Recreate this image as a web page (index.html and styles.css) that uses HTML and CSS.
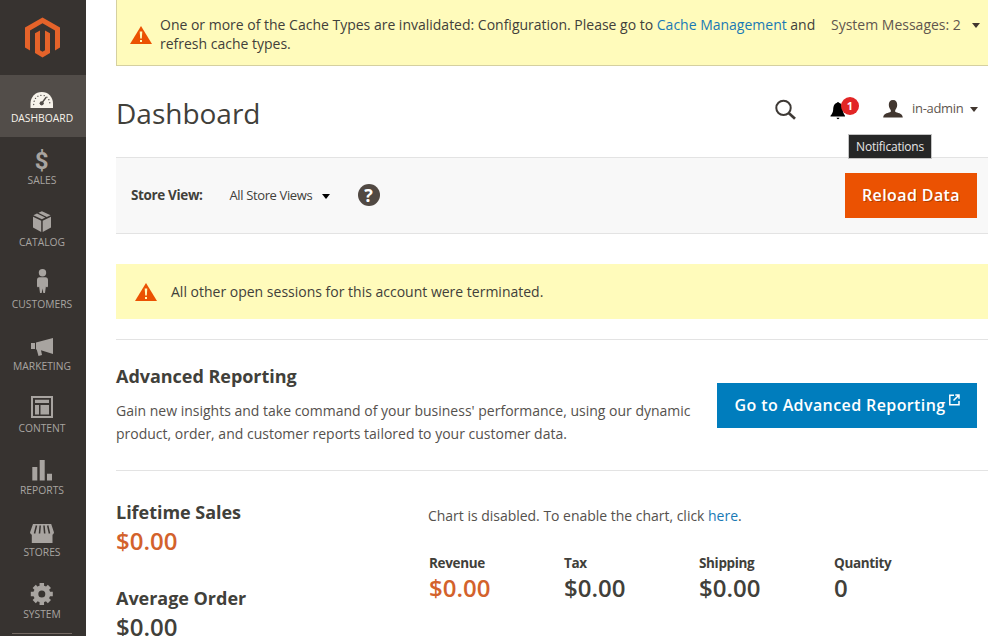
FILE: index.html
```html
<!DOCTYPE html>
<html lang="en">
<head>
<meta charset="utf-8">
<title>Dashboard</title>
<link rel="stylesheet" href="styles.css">
</head>
<body>
<div class="page">
  <nav class="menu">
    <a class="logo"><svg width="86" height="75" viewBox="0 0 86 75" fill="#e5632a"><path d="M42.500 17.500L60 27.500V47.500L55 50.500V30.500L42.500 23.300L30 30.500V50.500L25 47.500V27.500Z"/><path d="M35 33.300L40 30.400V50.200L42.500 51.700L45 50.200V30.400L50 33.300V53L42.500 57.500L35 53Z"/></svg></a>
    <a class="item active"><svg class="icon" viewBox="0 0 86 36"><path d="M30.500 33V28.500C30.500 21.800 35.500 17 41.800 17S53 21.800 53 28.500V33Z"/><g stroke="#524d49" fill="none" stroke-linecap="round"><path stroke-width="1.300" stroke-dasharray=".1 3.100" d="M33.700 29.500C33.700 24 37 20.300 41.800 20.300S49.900 24 49.900 29.500"/><path stroke-width="1.300" d="M46 22.500L41.500 28.500"/></g><circle cx="41.700" cy="28.300" r="2.100" fill="#524d49"/></svg><span>Dashboard</span></a>
    <a class="item"><svg class="icon" viewBox="0 0 86 36"><text class="dollar" x="41.700" y="31.500" text-anchor="middle">$</text></svg><span>Sales</span></a>
    <a class="item"><svg class="icon" viewBox="0 0 86 36"><path d="M33 17.800L41.200 21.800V33L33 28.500ZM51 17.800L42.700 21.800V33L51 28.500ZM33.400 16.300L37 14.500L45.200 18.500L41.900 20.300ZM38.400 13.800L41.900 12.200L50.600 16.200L46.800 17.900Z"/></svg><span>Catalog</span></a>
    <a class="item"><svg class="icon" viewBox="0 0 86 36"><circle cx="42.500" cy="11.800" r="3.700"/><path d="M39.600 16.200H45.400C47.200 16.200 48 17.400 48 19V25C48 26.600 46.300 26.800 45.900 25.600L45 32H43.300L42.500 27.500L41.700 32H40L39.100 25.600C38.700 26.800 37 26.600 37 25V19C37 17.400 37.800 16.200 39.600 16.200Z"/></svg><span>Customers</span></a>
    <a class="item"><svg class="icon" viewBox="0 0 86 36"><path d="M31 20H35V26H31ZM36 19.500L53 15V31L41 27.200L42 32L38.500 33L36.700 26.500H36Z"/></svg><span>Marketing</span></a>
    <a class="item"><svg class="icon" viewBox="0 0 86 36"><path fill-rule="evenodd" d="M31 11H53V33H31ZM33 13V31H51V13ZM35 14.800H49V18H35ZM35 20H39V29.500H35ZM40.500 20H49V29.500H40.500Z"/></svg><span>Content</span></a>
    <a class="item"><svg class="icon" viewBox="0 0 86 36"><path d="M32.300 20H37.300V33.500H32.300ZM39.700 13H44.700V33.500H39.700ZM47 26.700H52V33.500H47Z"/></svg><span>Reports</span></a>
    <a class="item"><svg class="icon" viewBox="0 0 86 36"><path d="M33 15H51.200L54 23.500Q53.500 25.500 52.500 25.700V34H31.800V25.700Q30.500 25.500 30 23.500Z"/><path stroke="#373330" stroke-width="1.500" fill="none" d="M36.500 16.500L34.500 24.500M40.200 16.500L39.500 24.500M44 16.500L44.700 24.500M47.700 16.500L49.500 24.500"/></svg><span>Stores</span></a>
    <a class="item"><svg class="icon" viewBox="0 0 86 36"><g transform="translate(41.800 23)"><circle r="6" fill="none" stroke="#a8a4a0" stroke-width="5"/><path stroke="#a8a4a0" stroke-width="4.500" d="M0-7V-11M0 7V11M7 0H11M-7 0H-11M5 5L7.600 7.600M-5-5L-7.600-7.600M5-5L7.600-7.600M-5 5L-7.600 7.600"/></g></svg><span>System</span></a>
    <div class="rule"></div>
  </nav>
  <main class="main">
    <section class="system">
      <svg class="warn" viewBox="0 0 22 18"><path fill="#eb5202" d="M11 0L22 18H0Z"/><path fill="#fffbbb" d="M9.700 5.500H12.300L11.800 12.500H10.200ZM10 14H12V16H10Z"/></svg>
      <p class="system-text">One or more of the Cache Types are invalidated: Configuration. Please go to <a>Cache Management</a> and<br>refresh cache types.</p>
      <span class="system-count">System Messages: 2</span><i class="caret"></i>
    </section>
    <header class="header">
      <h1>Dashboard</h1>
      <svg class="search" viewBox="0 0 22 22" fill="none" stroke="#3e3935"><circle cx="8.500" cy="8.900" r="7.200" stroke-width="2"/><path d="M13.700 14L20 19.800" stroke-width="2.700"/></svg>
      <div class="bell"><svg width="16" height="18" viewBox="0 0 16 18"><path d="M7 .8C7.300-.2 8.700-.2 9 .8C12 1.800 12.600 4.500 12.700 7.500C12.800 10.500 14 12 15 13.700V14.500H.5V13.700C2 12 3 10.500 3.200 7.500C3.400 4.500 4 1.800 7 .8ZM6.500 15.800H9.500Q9.200 17.200 8 17.200T6.500 15.800Z"/></svg><b class="badge">1</b><span class="tooltip">Notifications</span></div>
      <svg class="user" viewBox="0 0 20 18"><path fill="#41362f" d="M10 0C13 0 14.300 2 14.200 5C14.100 7.500 13 9 12.200 10V11.800C14 13 19.500 13 19.800 17.500H.2C.5 13 6 13 7.800 11.800V10C7 9 5.900 7.500 5.800 5C5.700 2 7 0 10 0Z"/></svg>
      <span class="account">in-admin</span><i class="caret"></i>
    </header>
    <section class="toolbar">
      <b class="store-label">Store View:</b><span class="store">All Store Views</span><i class="caret black"></i>
      <span class="help">?</span>
      <button class="button reload">Reload Data</button>
    </section>
    <section class="message">
      <svg class="warn" viewBox="0 0 22 18"><path fill="#eb5202" d="M11 0L22 18H0Z"/><path fill="#fffbbb" d="M9.700 5.500H12.300L11.800 12.500H10.200ZM10 14H12V16H10Z"/></svg>
      <span class="message-text">All other open sessions for this account were terminated.</span>
    </section>
    <section class="reporting">
      <div>
        <h2>Advanced Reporting</h2>
        <p class="description">Gain new insights and take command of your business' performance, using our dynamic<br>product, order, and customer reports tailored to your customer data.</p>
      </div>
      <button class="button advanced"><span>Go to Advanced Reporting</span><svg width="11" height="12" viewBox="0 0 11 12" fill="none" stroke="#fff" stroke-width="1.500"><path d="M5 1.200H.8V10.800H10V7M6.300 1H10V4.800M9.800 1.200L4.500 6.500"/></svg></button>
    </section>
    <section class="dashboard">
      <div class="sales">
        <h2>Lifetime Sales</h2><strong class="price accent">$0.00</strong>
        <h2 class="second">Average Order</h2><strong class="price">$0.00</strong>
      </div>
      <div class="stats">
        <p class="chart">Chart is disabled. To enable the chart, click <a>here</a>.</p>
        <div class="totals">
          <div><b>Revenue</b><strong class="price accent">$0.00</strong></div>
          <div><b>Tax</b><strong class="price">$0.00</strong></div>
          <div><b>Shipping</b><strong class="price">$0.00</strong></div>
          <div><b>Quantity</b><strong class="price">0</strong></div>
        </div>
      </div>
    </section>
  </main>
</div>
</body>
</html>
```
FILE: styles.css
```css
* { box-sizing: border-box; }
body { margin: 0; font: 14px/19px "Open Sans", sans-serif; color: #41403a; background: #fff; }
h1, h2, p { margin: 0; }
a { color: #1979b5; }
.page { display: flex; width: 988px; height: 636px; overflow: hidden; }
.menu { width: 86px; flex: none; background: #373330; }
.logo, .logo svg, .icon { display: block; }
.item { display: block; height: 62px; color: #a8a4a0; text-align: center; text-transform: uppercase; }
.item span { display: block; width: 84px; font-size: 10.3px; line-height: 14px; white-space: nowrap; }
.active { background: #524d49; color: #f7f3eb; }
.icon { width: 86px; height: 36px; fill: currentColor; }
.dollar { font: bold 24px Roboto, sans-serif; }
.rule { width: 60px; margin-left: 12px; border-top: 1px solid #736963; }
.main { width: 872px; margin-left: 30px; flex: none; }
.warn { width: 22px; height: 18px; flex: none; }
.caret { flex: none; border: solid transparent; border-width: 5px 4.500px 0; border-top-color: #41362f; }
.caret.black { border-top-color: #000; margin: 2px 0 0 8px; }
.system { display: flex; height: 66px; padding: 15px 7px 0 13px; background: #fffbbb; border: 1px solid #d5d0a0; border-width: 0 0 1px 1px; }
.system .warn { margin-top: 11px; }
.system-text { width: 671px; margin-left: 8px; letter-spacing: -.005px; white-space: nowrap; }
.system-count { width: 141px; color: #5f564f; white-space: nowrap; }
.system .caret { margin-top: 8px; }
.header { display: flex; height: 91px; }
h1 { width: 659px; margin-top: 28px; font-size: 28px; line-height: 38px; font-weight: 400; }
.search { width: 22px; height: 22px; margin-top: 33px; }
.bell { position: relative; width: 30px; height: 20px; margin: 36px 0 0 33px; }
.badge { position: absolute; left: 11px; top: -5px; width: 18px; height: 18px; border-radius: 50%; background: #e22626; color: #fff; font-size: 11px; line-height: 18px; text-align: center; }
.tooltip { position: absolute; left: 18px; top: 32px; width: 84px; height: 25px; border: 1px solid #c4c4c4; background: #262727; color: #e6e6e6; font-size: 12px; line-height: 23px; letter-spacing: -.22px; text-align: center; }
.user { width: 20px; height: 18px; margin: 34px 0 0 23px; }
.account { width: 58px; margin: 33px 0 0 9px; font-size: 13px; letter-spacing: -.3px; color: #5f564f; }
.header .caret { margin-top: 41px; }
.toolbar { display: flex; align-items: center; height: 77px; padding: 0 11px 1px 15px; background: #f8f8f8; border: 1px solid #e3e3e3; border-width: 1px 0; }
.store-label { width: 98.500px; padding-top: 1px; font-size: 13.5px; font-weight: 700; letter-spacing: -.36px; }
.store { width: 84px; padding-top: 1px; font-size: 13px; letter-spacing: -.37px; white-space: nowrap; }
.help { width: 22px; height: 22px; margin-left: 28px; border-radius: 50%; background: #514943; color: #fff; font-size: 18px; line-height: 22px; font-weight: 700; text-align: center; }
.button { display: flex; align-items: center; justify-content: center; height: 45px; padding: 0 0 2px; margin-left: auto; border: 0; color: #fff; font: 600 16px/22px "Open Sans", sans-serif; letter-spacing: .4px; white-space: nowrap; }
.reload { width: 132px; height: 45px; margin-top: 1px; background: #eb5202; text-shadow: 1px 1px 0 rgba(0, 0, 0, .25); }
.message { display: flex; align-items: center; height: 55px; margin-top: 30px; padding-left: 19px; background: #fffbbb; }
.message-text { margin-left: 14px; }
.reporting { display: flex; height: 132px; margin-top: 20px; padding-right: 11px; border: 1px solid #e3e3e3; border-width: 1px 0; }
h2 { font-size: 18px; line-height: 25px; font-weight: 700; letter-spacing: -.03px; white-space: nowrap; }
.reporting h2 { margin-top: 24px; }
.description { margin-top: 10px; line-height: 23px; color: #55514d; white-space: nowrap; }
.advanced { width: 260px; margin-top: 43px; background: #007dbd; }
.advanced svg { margin: -10px 0 0 3px; }
.dashboard { display: flex; }
.sales { width: 312px; padding-top: 29px; }
.price { display: block; margin-top: -1px; font-size: 24px; line-height: 33px; font-weight: 600; }
.accent { color: #d3622c; }
.second { margin-top: 29px; }
.stats { padding-top: 35px; }
.chart { color: #55514d; letter-spacing: -.02px; }
.totals { display: flex; margin: 29px 0 0 1px; }
.totals > div { width: 135px; }
.totals b { display: block; height: 18px; font-size: 13.5px; line-height: 18px; font-weight: 700; letter-spacing: -.35px; }
```
